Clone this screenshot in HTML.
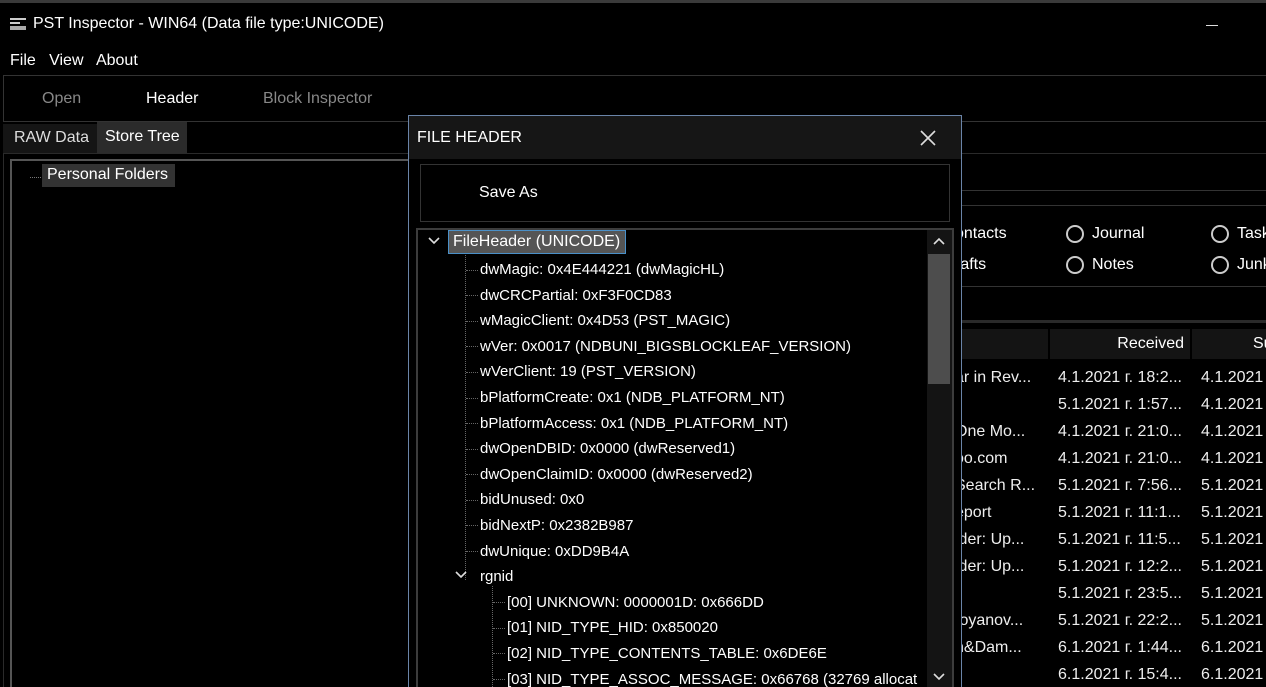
<!DOCTYPE html>
<html><head><meta charset="utf-8"><style>
*{margin:0;padding:0;box-sizing:border-box}
html,body{width:1266px;height:687px;overflow:hidden}
body{background:#000;color:#fff;font-family:"Liberation Sans",sans-serif;font-size:15px;position:relative}
.a{position:absolute;white-space:nowrap}
.ln{position:absolute;background:#333}
.t{position:absolute;white-space:nowrap;line-height:20px}
.rad{position:absolute;width:18px;height:18px;border:2px solid #ccc;border-radius:50%}
.d{display:inline-block;width:12px;border-top:1px dotted #666;vertical-align:middle;margin-right:2px}
</style></head><body>
<div class="ln" style="left:0;top:0;width:1266px;height:3px;background:#3a3a3a"></div>
<svg class="a" style="left:9px;top:17px" width="18" height="14"><rect x="1" y="1" width="16" height="2" fill="#ccc"/><rect x="1" y="5" width="10" height="2" fill="#ccc"/><rect x="1" y="9" width="16" height="4" fill="#aaa"/></svg>
<div class="t" style="left:33px;top:14px;font-size:16px">PST Inspector - WIN64 (Data file type:UNICODE)</div>
<div class="ln" style="left:1206px;top:25px;width:12px;height:1px;background:#ddd"></div>
<div class="t" style="left:10px;top:51px;font-size:16px">File&nbsp;&nbsp; View&nbsp;&nbsp; About</div>
<div class="a" style="left:3px;top:75px;width:1263px;height:47px;border:1px solid #333;border-right:none"></div>
<div class="t" style="left:42px;top:89px;font-size:16px;color:#888">Open</div>
<div class="t" style="left:146px;top:89px;font-size:16px">Header</div>
<div class="t" style="left:263px;top:89px;font-size:16px;color:#888">Block Inspector</div>
<div class="a" style="left:3px;top:124px;width:94px;height:30px;background:#151515"></div>
<div class="t" style="left:14px;top:128px;font-size:16px;color:#ddd">RAW Data</div>
<div class="a" style="left:97px;top:122px;width:90px;height:32px;background:#2b2b2b"></div>
<div class="t" style="left:105px;top:127px;font-size:16px">Store Tree</div>
<div class="a" style="left:3px;top:153px;width:1263px;height:540px;border:1px solid #2a2a2a;border-right:none"></div>
<div class="a" style="left:10px;top:159px;width:410px;height:540px;border:2px solid #555"></div>
<div class="a" style="left:30px;top:177px;width:11px;border-top:1px dotted #777"></div>
<div class="a" style="left:42px;top:164px;width:133px;height:23px;background:#333"></div>
<div class="t" style="left:47px;top:165px;font-size:16px">Personal Folders</div>
<!-- right area -->
<div class="ln" style="left:960px;top:190px;width:306px;height:1px"></div>
<div class="ln" style="left:960px;top:205px;width:306px;height:1px"></div>
<div class="ln" style="left:960px;top:286px;width:306px;height:1px"></div>
<div class="ln" style="left:960px;top:320px;width:306px;height:3px;background:#2a2a2a"></div>
<div class="t" style="left:955px;top:224px;font-size:16px">ontacts</div>
<div class="t" style="left:955px;top:255px;font-size:16px">rafts</div>
<div class="rad" style="left:1066px;top:225px"></div><div class="t" style="left:1092px;top:224px;font-size:16px">Journal</div>
<div class="rad" style="left:1066px;top:256px"></div><div class="t" style="left:1092px;top:255px;font-size:16px">Notes</div>
<div class="rad" style="left:1211px;top:225px"></div><div class="t" style="left:1237px;top:224px;font-size:16px">Task</div>
<div class="rad" style="left:1211px;top:256px"></div><div class="t" style="left:1237px;top:255px;font-size:16px">Junk</div>
<div class="a" style="left:960px;top:329px;width:88px;height:30px;background:#141414"></div>
<div class="a" style="left:1050px;top:329px;width:140px;height:30px;background:#141414"></div>
<div class="a" style="left:1192px;top:329px;width:80px;height:30px;background:#141414"></div>
<div class="t" style="left:1050px;top:334px;width:134px;text-align:right;font-size:16px">Received</div>
<div class="t" style="left:1253px;top:334px;font-size:16px">Su</div>
<div class="a" style="left:955px;top:364px;line-height:27px;font-size:16px;color:#eee">ar in Rev...<br>&nbsp;<br>One Mo...<br>oo.com<br>Search R...<br>eport<br>lder: Up...<br>lder: Up...<br>&nbsp;<br>toyanov...<br>n&amp;Dam...<br>&nbsp;</div>
<div class="a" style="left:1058px;top:364px;line-height:27px;font-size:16px;color:#eee">4.1.2021 г. 18:2...<br>5.1.2021 г. 1:57...<br>4.1.2021 г. 21:0...<br>4.1.2021 г. 21:0...<br>5.1.2021 г. 7:56...<br>5.1.2021 г. 11:1...<br>5.1.2021 г. 11:5...<br>5.1.2021 г. 12:2...<br>5.1.2021 г. 23:5...<br>5.1.2021 г. 22:2...<br>6.1.2021 г. 1:44...<br>6.1.2021 г. 15:4...</div>
<div class="a" style="left:1201px;top:364px;line-height:27px;font-size:16px;color:#eee">4.1.2021 г<br>4.1.2021 г<br>4.1.2021 г<br>4.1.2021 г<br>5.1.2021 г<br>5.1.2021 г<br>5.1.2021 г<br>5.1.2021 г<br>5.1.2021 г<br>5.1.2021 г<br>6.1.2021 г<br>6.1.2021 г</div>
<!-- dialog -->
<div class="a" style="left:408px;top:115px;width:554px;height:580px;background:#000;border:1px solid #6a84a8"></div>
<div class="a" style="left:409px;top:116px;width:552px;height:43px;background:#161616"></div>
<div class="t" style="left:417px;top:128px;font-size:16px">FILE HEADER</div>
<svg class="a" style="left:920px;top:130px" width="16" height="16"><path d="M1 1L15 15M15 1L1 15" stroke="#ddd" stroke-width="1.6"/></svg>
<div class="a" style="left:420px;top:164px;width:530px;height:58px;border:1px solid #333"></div>
<div class="t" style="left:479px;top:183px;font-size:16px">Save As</div>
<div class="a" style="left:416px;top:228px;width:538px;height:470px;border:2px solid #3c3c3c"></div>
<div class="a" style="left:927px;top:230px;width:25px;height:460px;background:#141414"></div>
<div class="a" style="left:928px;top:254px;width:22px;height:130px;background:#4d4d4d"></div>
<svg class="a" style="left:932px;top:236px" width="14" height="10"><path d="M2 8L7 3L12 8" stroke="#ddd" stroke-width="1.6" fill="none"/></svg>
<svg class="a" style="left:932px;top:672px" width="14" height="10"><path d="M2 2L7 7L12 2" stroke="#ddd" stroke-width="1.6" fill="none"/></svg>
<svg class="a" style="left:427px;top:236px" width="14" height="10"><path d="M2 2L7 7L12 2" stroke="#ddd" stroke-width="1.6" fill="none"/></svg>
<div class="a" style="left:448px;top:230px;width:178px;height:24px;background:#555;border:1px solid #4a90c8"></div>
<div class="t" style="left:453px;top:232px;font-size:16px">FileHeader (UNICODE)</div>
<div class="a" style="left:465px;top:255px;height:325px;border-left:1px dotted #666"></div>
<div class="a" style="left:492px;top:586px;height:101px;border-left:1px dotted #666"></div>
<svg class="a" style="left:454px;top:570px" width="14" height="10"><path d="M2 2L7 7L12 2" stroke="#ddd" stroke-width="1.6" fill="none"/></svg>
<div class="a" style="left:466px;top:257px;line-height:25.6px;font-size:15px">
<div><span class="d"></span>dwMagic: 0x4E444221 (dwMagicHL)</div>
<div><span class="d"></span>dwCRCPartial: 0xF3F0CD83</div>
<div><span class="d"></span>wMagicClient: 0x4D53 (PST_MAGIC)</div>
<div><span class="d"></span>wVer: 0x0017 (NDBUNI_BIGSBLOCKLEAF_VERSION)</div>
<div><span class="d"></span>wVerClient: 19 (PST_VERSION)</div>
<div><span class="d"></span>bPlatformCreate: 0x1 (NDB_PLATFORM_NT)</div>
<div><span class="d"></span>bPlatformAccess: 0x1 (NDB_PLATFORM_NT)</div>
<div><span class="d"></span>dwOpenDBID: 0x0000 (dwReserved1)</div>
<div><span class="d"></span>dwOpenClaimID: 0x0000 (dwReserved2)</div>
<div><span class="d"></span>bidUnused: 0x0</div>
<div><span class="d"></span>bidNextP: 0x2382B987</div>
<div><span class="d"></span>dwUnique: 0xDD9B4A</div>
<div style="padding-left:14px">rgnid</div>
<div style="padding-left:27px"><span class="d"></span>[00] UNKNOWN: 0000001D: 0x666DD</div>
<div style="padding-left:27px"><span class="d"></span>[01] NID_TYPE_HID: 0x850020</div>
<div style="padding-left:27px"><span class="d"></span>[02] NID_TYPE_CONTENTS_TABLE: 0x6DE6E</div>
<div style="padding-left:27px;width:460px;overflow:hidden"><span class="d"></span>[03] NID_TYPE_ASSOC_MESSAGE: 0x66768 (32769 allocat</div>
</div>
</body></html>
